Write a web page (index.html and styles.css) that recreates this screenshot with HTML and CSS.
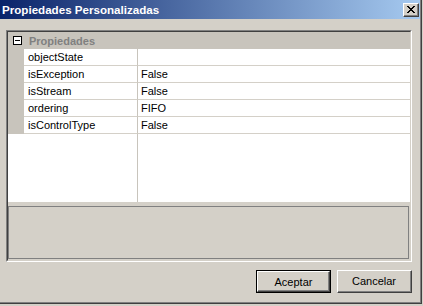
FILE: index.html
```html
<!DOCTYPE html>
<html lang="es">
<head>
<meta charset="utf-8">
<title>Propiedades Personalizadas</title>
<link rel="stylesheet" href="styles.css">
</head>
<body>
<div class="window">
  <div class="window-inner">
    <div class="titlebar">
      <span class="title">Propiedades Personalizadas</span>
      <div class="close-btn">
        <svg width="8" height="7" viewBox="0 0 8 7" class="close-x"><path d="M0 0h2v1h1v1h2v-1h1v-1h2v1h-1v1h-1v1h-1v1h1v1h1v1h1v1h-2v-1h-1v-1h-2v1h-1v1h-2v-1h1v-1h1v-1h1v-1h-1v-1h-1v-1h-1z" fill="#000"/></svg>
      </div>
    </div>
    <div class="client">
      <div class="frame">
        <div class="frame-inner">
          <div class="grid">
            <div class="grid-header">
              <div class="toggle"><span class="minus"></span></div>
              <span class="category">Propiedades</span>
            </div>
            <div class="row"><div class="gutter"></div><div class="name">objectState</div><div class="value"></div></div>
            <div class="row"><div class="gutter"></div><div class="name">isException</div><div class="value">False</div></div>
            <div class="row"><div class="gutter"></div><div class="name">isStream</div><div class="value">False</div></div>
            <div class="row"><div class="gutter"></div><div class="name">ordering</div><div class="value">FIFO</div></div>
            <div class="row"><div class="gutter"></div><div class="name">isControlType</div><div class="value">False</div></div>
            <div class="fill"><div class="fill-name"></div><div class="fill-value"></div></div>
          </div>
          <div class="desc"></div>
        </div>
      </div>
      <div class="buttons">
        <div class="btn btn-default"><div class="btn-face">Aceptar</div></div>
        <div class="btn"><div class="btn-face">Cancelar</div></div>
      </div>
    </div>
  </div>
</div>
</body>
</html>
```

FILE: styles.css
```css
html, body {
  margin: 0;
  padding: 0;
  background: #D4D0C8;
  font-family: "Liberation Sans", Arial, sans-serif;
  font-size: 11px;
  color: #000;
}

.window {
  width: 421px;
  height: 303px;
  border-right: 1px solid #404040;
  border-bottom: 1px solid #404040;
}

.window-inner {
  height: 302px;
  border-right: 1px solid #808080;
  border-bottom: 1px solid #808080;
  display: flex;
  flex-direction: column;
}

.titlebar {
  height: 19px;
  background: linear-gradient(to right, #0A246A, #A6CAF0);
  display: flex;
  align-items: center;
  justify-content: space-between;
  padding: 0 1px 0 2px;
}

.title {
  color: #fff;
  font-weight: bold;
  font-size: 11.6px;
  line-height: 19px;
  font-family: "Liberation Sans", Arial, sans-serif;
}

.close-btn {
  width: 14px;
  height: 12px;
  background: #D4D0C8;
  border-top: 1px solid #fff;
  border-left: 1px solid #fff;
  border-right: 1px solid #404040;
  border-bottom: 1px solid #404040;
  box-shadow: inset -1px -1px 0 #808080;
  display: flex;
  align-items: center;
  justify-content: center;
  margin-top: 1px;
}

.close-x {
  display: block;
  margin-left: -1px;
  margin-top: -1px;
}

.client {
  flex: 1;
  padding: 11px 8px 0 6px;
  display: flex;
  flex-direction: column;
}

.frame {
  width: 404px;
  height: 230px;
  border-top: 1px solid #808080;
  border-left: 1px solid #808080;
  border-right: 1px solid #fff;
  border-bottom: 1px solid #fff;
}

.frame-inner {
  height: 228px;
  border-top: 1px solid #404040;
  border-left: 1px solid #404040;
  border-right: 1px solid #D4D0C8;
  border-bottom: 1px solid #D4D0C8;
  display: flex;
  flex-direction: column;
}

.grid {
  height: 170px;
  background: #fff;
  display: flex;
  flex-direction: column;
}

.grid-header {
  height: 17px;
  background: #C8C4BC;
  display: flex;
  align-items: center;
}

.toggle {
  width: 16px;
  display: flex;
  justify-content: center;
}

.minus {
  width: 7px;
  height: 7px;
  border: 1px solid #000;
  background: #fff;
  position: relative;
  margin-left: 2px;
}

.minus::after {
  content: "";
  position: absolute;
  left: 1px;
  top: 3px;
  width: 5px;
  height: 1px;
  background: #000;
}

.category {
  font-weight: bold;
  color: #808080;
  padding-left: 5px;
}

.row {
  height: 17px;
  display: flex;
}

.gutter {
  width: 16px;
  background: #C8C4BC;
}

.name {
  width: 109px;
  padding-left: 4px;
  border-right: 1px solid #C8C4BC;
  border-bottom: 1px solid #D4D0C8;
  line-height: 16px;
  white-space: nowrap;
}

.value {
  flex: 1;
  padding-left: 3px;
  border-bottom: 1px solid #D4D0C8;
  line-height: 16px;
}

.fill {
  flex: 1;
  display: flex;
}

.fill-name {
  width: 129px;
  border-right: 1px solid #C8C4BC;
}

.desc {
  margin-top: 4px;
  height: 51px;
  border: 1px solid #808080;
  margin-right: 1px;
}

.buttons {
  margin-top: 8px;
  display: flex;
  justify-content: flex-end;
  gap: 6px;
}

.btn {
  width: 75px;
  height: 23px;
  box-sizing: border-box;
  border-top: 1px solid #fff;
  border-left: 1px solid #fff;
  border-right: 1px solid #404040;
  border-bottom: 1px solid #404040;
  background: #D4D0C8;
}

.btn-face {
  height: 100%;
  box-sizing: border-box;
  border-right: 1px solid #808080;
  border-bottom: 1px solid #808080;
  display: flex;
  align-items: center;
  justify-content: center;
}

.btn-default {
  border: 1px solid #000;
}

.btn-default .btn-face {
  border-top: 1px solid #fff;
  border-left: 1px solid #fff;
  border-right: 1px solid #404040;
  border-bottom: 1px solid #404040;
  box-shadow: inset -1px -1px 0 #808080;
}
```
